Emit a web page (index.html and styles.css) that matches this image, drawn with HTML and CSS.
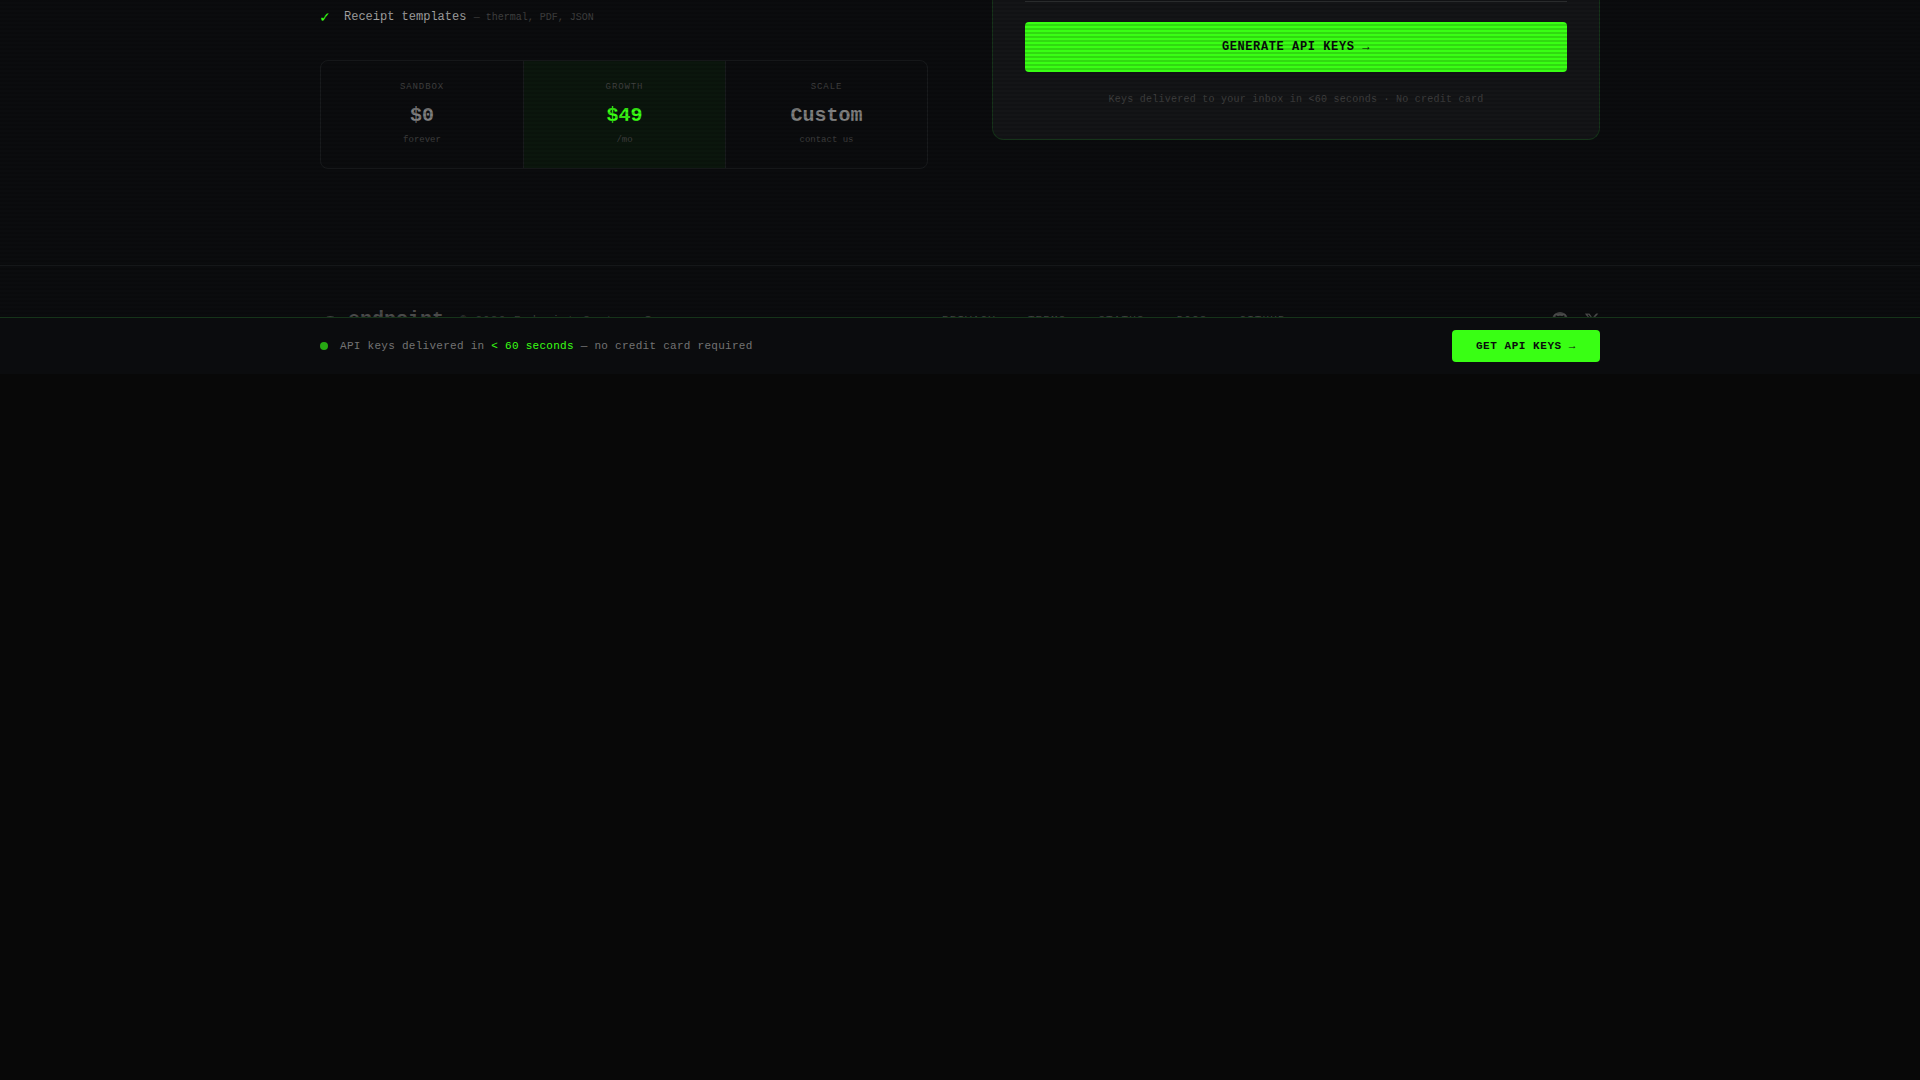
FILE: index.html
```html
<!DOCTYPE html>
<html lang="en">

<head>
    <meta charset="UTF-8">
    <meta name="viewport" content="width=device-width, initial-scale=1.0">
    <title>endpoint</title>
    <link rel="stylesheet" href="styles.css">
</head>

<body>

    <div class="page">
        <main class="container pricing">
            <div class="pricing-info">
                <ul class="features">
                    <li><span class="check">✓</span><span>Receipt templates <small>— thermal, PDF, JSON</small></span></li>
                </ul>
                <div class="plans">
                    <div class="plan">
                        <div class="plan-name">SANDBOX</div>
                        <div class="plan-price">$0</div>
                        <div class="plan-note">forever</div>
                    </div>
                    <div class="plan plan-active">
                        <div class="plan-name">GROWTH</div>
                        <div class="plan-price">$49</div>
                        <div class="plan-note">/mo</div>
                    </div>
                    <div class="plan">
                        <div class="plan-name">SCALE</div>
                        <div class="plan-price">Custom</div>
                        <div class="plan-note">contact us</div>
                    </div>
                </div>
            </div>

            <form class="signup">
                <div class="field-end"></div>
                <button type="submit" class="signup-button">GENERATE API KEYS →</button>
                <p class="signup-note">Keys delivered to your inbox in &lt;60 seconds · No credit card</p>
            </form>
        </main>

        <footer class="footer">
            <div class="container footer-row">
                <div class="brand">
                    <svg class="brand-icon" viewBox="0 0 20 20" width="20" height="20" fill="none" stroke="currentColor" stroke-width="2">
                        <path d="M5 9q5-4 11 0M7 13q3-3 7 0" />
                    </svg>
                    <span class="brand-name">endpoint</span>
                    <span class="copyright">© 2026 Endpoint Systems Inc.</span>
                </div>
                <nav class="footer-links">
                    <a href="#">PRIVACY</a>
                    <a href="#">TERMS</a>
                    <a href="#">STATUS</a>
                    <a href="#">DOCS</a>
                    <a href="#">GITHUB</a>
                </nav>
                <div class="social">
                    <a href="#" aria-label="GitHub">
                        <svg viewBox="0 0 16 16" width="16" height="16" fill="currentColor">
                            <path d="M8 0C3.58 0 0 3.58 0 8c0 3.54 2.29 6.53 5.47 7.59.4.07.55-.17.55-.38 0-.19-.01-.82-.01-1.49-2.01.37-2.53-.49-2.69-.94-.09-.23-.48-.94-.82-1.13-.28-.15-.68-.52-.01-.53.63-.01 1.08.58 1.23.82.72 1.21 1.87.87 2.33.66.07-.52.28-.87.51-1.07-1.78-.2-3.64-.89-3.64-3.95 0-.87.31-1.59.82-2.15-.08-.2-.36-1.02.08-2.12 0 0 .67-.21 2.2.82.64-.18 1.32-.27 2-.27s1.36.09 2 .27c1.53-1.04 2.2-.82 2.2-.82.44 1.1.16 1.92.08 2.12.51.56.82 1.27.82 2.15 0 3.07-1.87 3.75-3.65 3.95.29.25.54.73.54 1.48 0 1.07-.01 1.93-.01 2.2 0 .21.15.46.55.38A8 8 0 0 0 16 8c0-4.42-3.58-8-8-8z" />
                        </svg>
                    </a>
                    <a href="#" aria-label="X">
                        <svg viewBox="0 0 24 24" width="16" height="16" fill="currentColor">
                            <path d="M18.24 2.25h3.31l-7.23 8.26 8.5 11.24h-6.66l-5.21-6.82-5.97 6.82H1.68l7.73-8.84L1.25 2.25h6.83l4.71 6.23zm-1.16 17.52h1.83L7.08 4.13H5.12z" />
                        </svg>
                    </a>
                </div>
            </div>
        </footer>

        <div class="scanlines"></div>

        <div class="cta-bar">
            <div class="container cta-row">
                <div class="cta-text">
                    <span class="dot"></span>
                    <span>API keys delivered in <span class="highlight">&lt; 60 seconds</span> — no credit card required</span>
                </div>
                <button type="button" class="cta-button">GET API KEYS →</button>
            </div>
        </div>
    </div>

</body>

</html>
```
FILE: styles.css
```css
* {
    box-sizing: border-box;
}

body {
    font-family: "Liberation Mono", monospace;
    margin: 0;
    background-color: #080808;
    color: #a3a3a3;
}

button {
    font-family: inherit;
    border: none;
    cursor: pointer;
    color: #0a0b0d;
    background-color: #39ff14;
    border-radius: 4px;
    font-weight: bold;
    letter-spacing: 0.05em;
}

a {
    color: inherit;
    text-decoration: none;
}

.page {
    position: relative;
    background-color: #0b0c0e;
    overflow: hidden;
}

.container {
    max-width: 1280px;
    margin: 0 auto;
}

/* Pricing */
.pricing {
    display: grid;
    grid-template-columns: 1fr 1fr;
    gap: 64px;
    align-items: start;
    padding-bottom: 96px;
}

.features {
    list-style: none;
    margin: 0 0 32px;
    padding: 7px 0 0;
}

.features li {
    display: flex;
    align-items: center;
    gap: 8px;
    font-size: 12px;
    line-height: 21px;
}

.check {
    width: 16px;
    font-size: 16px;
    line-height: 18px;
    color: #39ff14;
}

.features small {
    font-size: 10px;
    color: #404040;
}

.plans {
    display: grid;
    grid-template-columns: repeat(3, 1fr);
    border: 1px solid #191b1d;
    border-radius: 8px;
    overflow: hidden;
}

.plan {
    padding: 20px 16px 22px;
    text-align: center;
    line-height: 12px;
    font-size: 9px;
    color: #404040;
}

.plan + .plan {
    border-left: 1px solid #191b1d;
}

.plan-active {
    background-color: #0b160d;
}

.plan-name {
    letter-spacing: 0.1em;
}

.plan-price {
    margin: 7px 0 2px;
    font-size: 20px;
    line-height: 32px;
    font-weight: bold;
    color: #808080;
}

.plan-active .plan-price {
    color: #39ff14;
}

/* Sign up card */
.signup {
    padding: 0 32px 32px;
    border: 1px solid #16341a;
    border-top: none;
    border-radius: 0 0 12px 12px;
    background-color: #141517;
}

.field-end {
    height: 2px;
    margin-bottom: 20px;
    border-bottom: 1px solid #303234;
}

.signup-button {
    width: 100%;
    height: 50px;
    font-size: 12px;
}

.signup-note {
    margin: 20px 0 0;
    font-size: 10px;
    line-height: 15px;
    letter-spacing: 0.025em;
    text-align: center;
    color: #404040;
}

/* Footer */
.footer {
    height: 109px;
    padding-top: 38px;
    border-top: 1px solid #191b1d;
    color: #4a4a4a;
}

.footer-row {
    display: flex;
    justify-content: space-between;
    align-items: center;
}

.brand {
    display: flex;
    align-items: center;
}

.brand-name {
    margin: 0 16px 0 8px;
    font-size: 20px;
    line-height: 32px;
    font-weight: bold;
}

.copyright {
    font-size: 11px;
    letter-spacing: 0.1em;
    color: #404040;
}

.footer-links {
    display: flex;
    gap: 32px;
    font-size: 11px;
    letter-spacing: 0.1em;
}

.social {
    display: flex;
    gap: 16px;
}

.social svg {
    display: block;
}

/* CRT lines over the page */
.scanlines {
    position: absolute;
    inset: 0;
    pointer-events: none;
    background: repeating-linear-gradient(180deg, rgba(0, 0, 0, 0.15) 0 2px, transparent 2px 4px);
}

/* Bottom bar */
.cta-bar {
    position: absolute;
    left: 0;
    right: 0;
    bottom: 0;
    padding: 12px 0;
    border-top: 1px solid #16341a;
    background-color: #0b0c0e;
}

.cta-row {
    display: flex;
    justify-content: space-between;
    align-items: center;
}

.cta-text {
    display: flex;
    align-items: center;
    gap: 12px;
    font-size: 11px;
    letter-spacing: 0.025em;
    color: #737373;
}

.highlight {
    color: #39ff14;
}

.dot {
    width: 8px;
    height: 8px;
    border-radius: 50%;
    background-color: #27a913;
}

.cta-button {
    height: 32px;
    padding: 0 24px;
    font-size: 11px;
}
```
